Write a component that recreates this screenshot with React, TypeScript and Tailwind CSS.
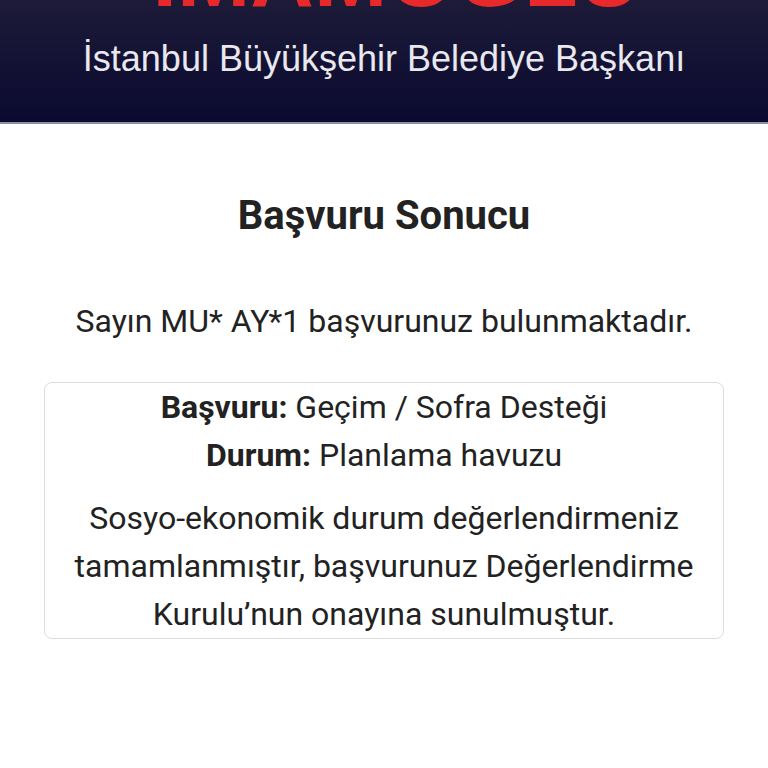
import React from 'react';

export default function App() {
  return (
    <div className="min-h-screen bg-white" style={{ fontFamily: 'Roboto, "Noto Sans", sans-serif' }}>
      {/* header banner */}
      <header className="h-[124px] overflow-hidden bg-gradient-to-b from-[#1d1b38] to-[#0b0930] border-b-2 border-[#8c90a3] flex flex-col items-center">
        <div
          className="-mt-[68px] ml-[26px] text-[88px] leading-none font-bold text-[#e8292b]"
          style={{ fontFamily: '"Liberation Sans", Arial, sans-serif' }}
        >
          İMAMOĞLU
        </div>
        <div
          className="mt-[21px] text-[36px] leading-none text-[#e8e8ee]"
          style={{ fontFamily: '"Liberation Sans", Arial, sans-serif' }}
        >
          İstanbul Büyükşehir Belediye Başkanı
        </div>
      </header>

      <main className="flex flex-col items-center px-[44px] text-[#222]">
        <h1 className="mt-[68px] text-[40px] font-bold leading-[48px]">Başvuru Sonucu</h1>
        <p className="mt-[57px] text-[32px] leading-[48px]">Sayın MU* AY*1 başvurunuz bulunmaktadır.</p>

        <div className="mt-[37px] w-full rounded-lg border border-[#dcdcdc] px-4 text-center text-[32px] leading-[48px]">
          <div>
            <span className="font-bold">Başvuru:</span> Geçim / Sofra Desteği
          </div>
          <div>
            <span className="font-bold">Durum:</span> Planlama havuzu
          </div>
          <p className="mt-[15px]">
            Sosyo-ekonomik durum değerlendirmeniz tamamlanmıştır, başvurunuz Değerlendirme Kurulu’nun onayına sunulmuştur.
          </p>
        </div>
      </main>
    </div>
  );
}
